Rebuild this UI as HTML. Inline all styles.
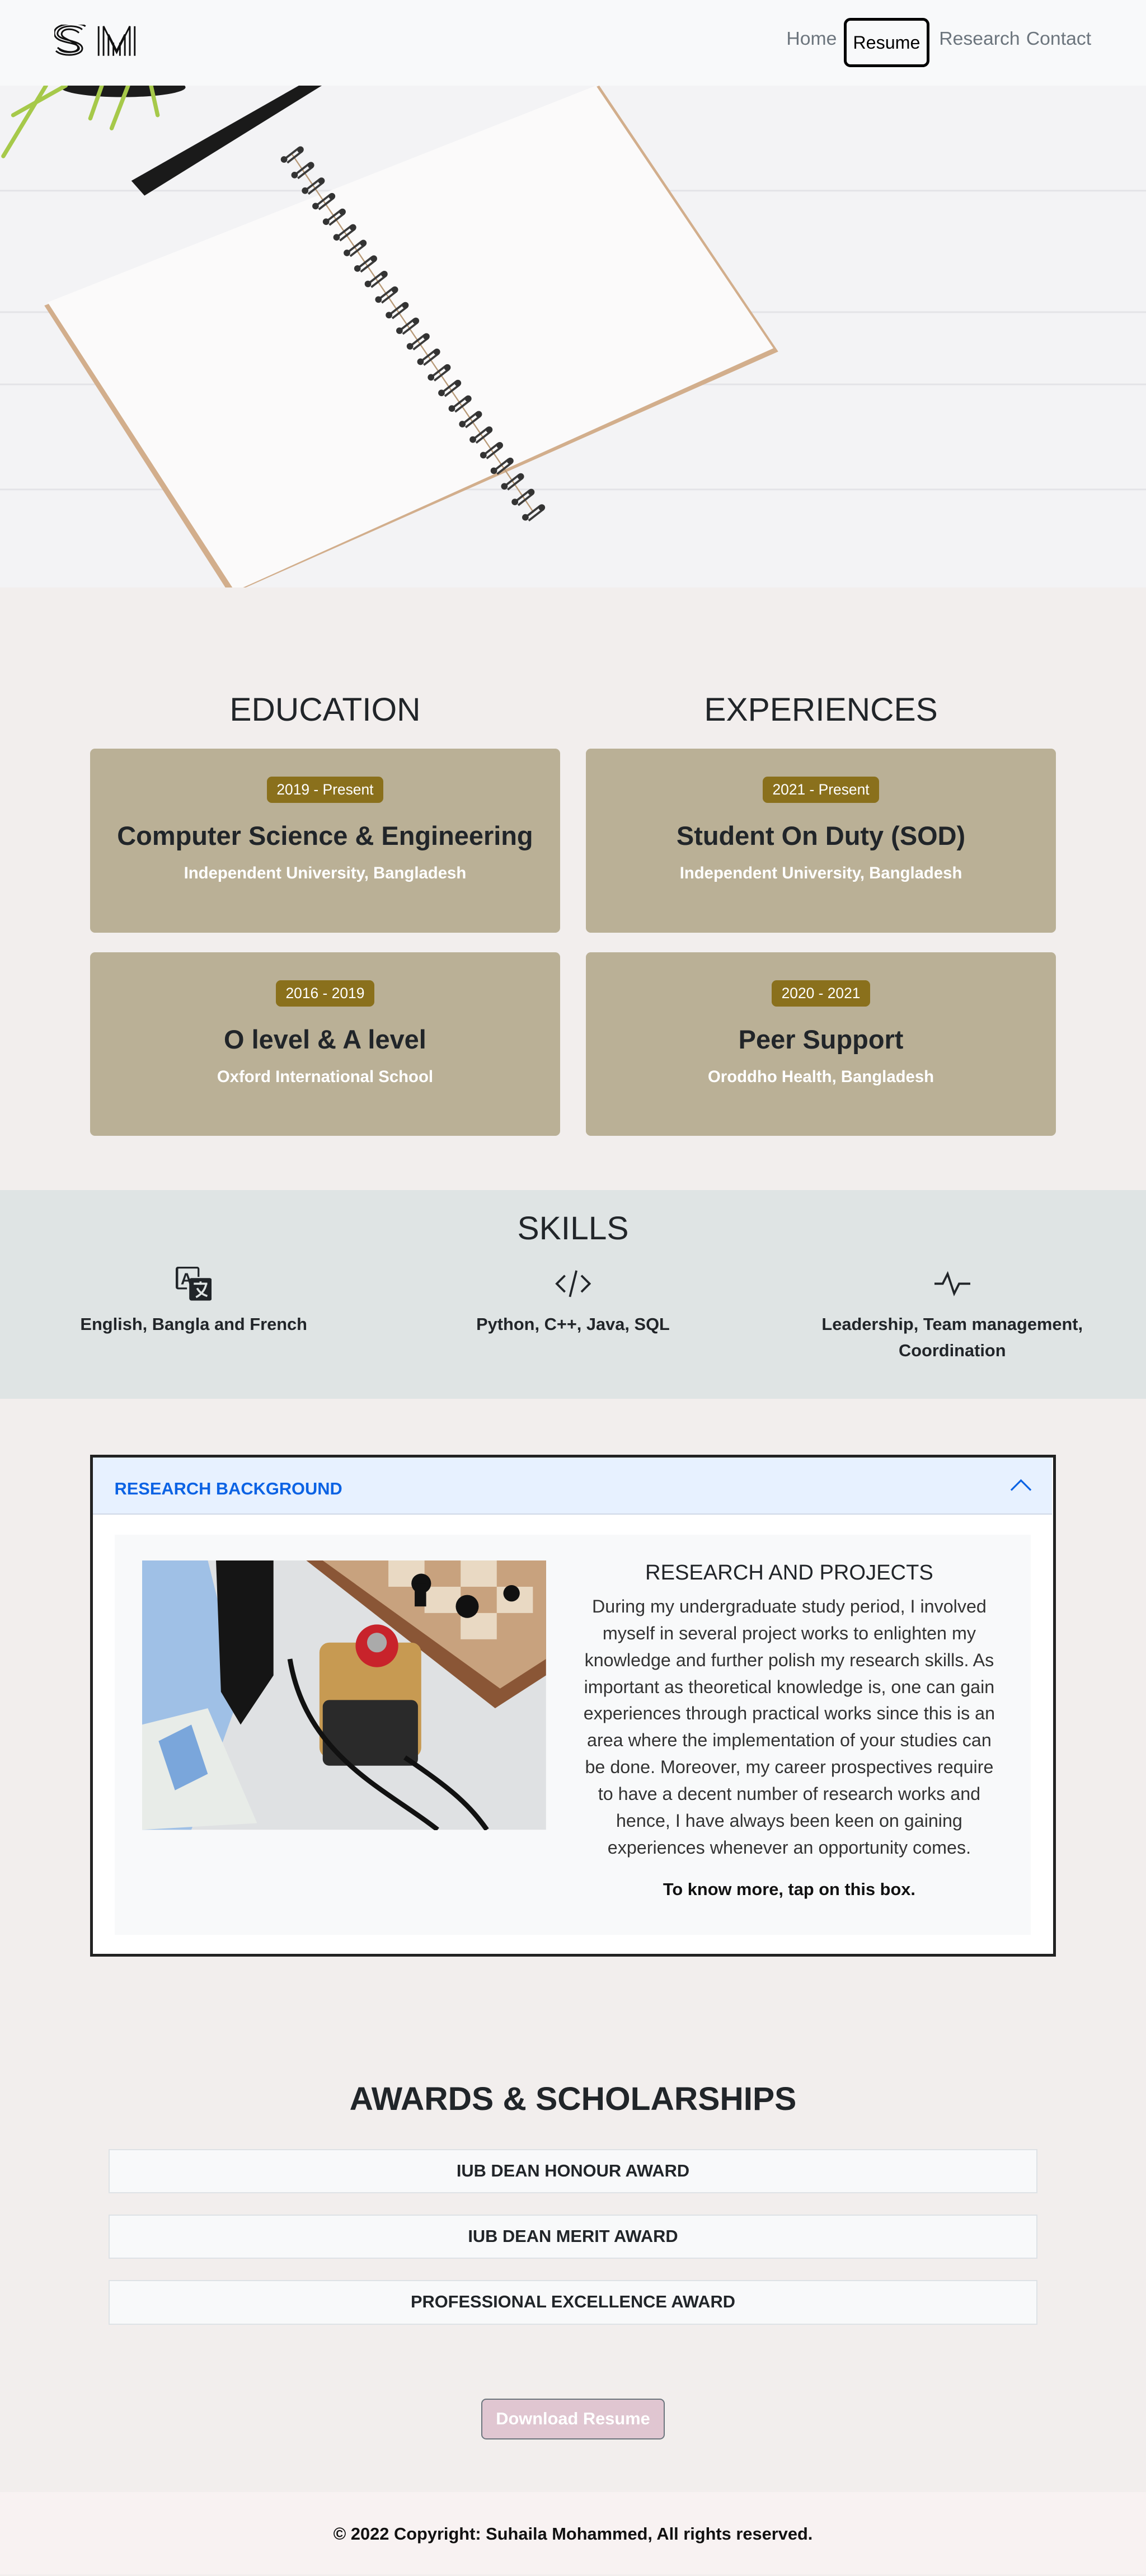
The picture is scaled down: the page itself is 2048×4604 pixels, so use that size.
<!DOCTYPE html>
<html><head><meta charset="utf-8">
<style>
html{zoom:2.9341}
*{box-sizing:border-box;margin:0;padding:0}
body{width:698px;height:1568px;overflow:hidden;background:#f2eeed;font-family:"Liberation Sans",sans-serif;color:#212529;position:relative}
.abs{position:absolute}
.nav{left:0;top:0;width:698px;height:52px;background:#f8f9fa}
.nav a{position:absolute;top:17px;font-size:11.5px;color:#6c757d;text-decoration:none}
.resume{left:514px;top:11px;width:52px;height:30px;border:2px solid #000;border-radius:4px;font-size:11px;color:#000;text-align:center;line-height:27px}
h2{position:absolute;font-weight:400;font-size:20px;text-align:center}
.card{position:absolute;width:286px;height:112px;background:#bab096;border-radius:3px;text-align:center}
.badge{display:inline-block;margin-top:17px;background:#8a701c;color:#fff;font-size:9px;padding:2px 6px;border-radius:3px;line-height:12px}
.card .t{font-size:16px;font-weight:bold;margin-top:11px}
.card .s{font-size:10px;font-weight:bold;color:#fff;margin-top:8px}
.skill{position:absolute;width:230px;text-align:center;font-size:10.5px;font-weight:bold;line-height:16px}
.award{position:absolute;left:66px;width:566px;height:27px;background:#f8f9fa;border:1px solid #dee2e6;text-align:center;font-size:10.5px;font-weight:bold;line-height:25px}
</style></head><body>
<div class="abs nav">
 <svg class="abs" style="left:33px;top:15px" width="62" height="20" viewBox="0 0 62 20">
  <g fill="none" stroke="#111" stroke-width="1">
   <path d="M17 3C14 0 3 0 2 5C1 10 16 9 17 14C18 19 5 20 1 16"/>
   <path d="M15 5C12 2 5 2 4.5 5.5C4 9 14 10 14.5 14C15 17 6 18 3 15"/>
   <path d="M19 1C15 -2 0 -1 0 5C0 12 14 10 15 14C16 17 7 18 2 14"/>
   <path d="M30 19V1L38 17L46 1V19M33 19V6L38 16L43 6V19M36 19V11M40 19V11M27 19V1M49 19V1"/>
  </g>
 </svg>
 <a style="left:479px">Home</a>
 <div class="abs resume">Resume</div>
 <a style="left:572px">Research</a>
 <a style="left:625px">Contact</a>
</div>
<svg class="abs" style="left:0;top:52px" width="698" height="306" viewBox="0 52 698 306">
 <defs>
  <g id="r"><path d="M-5 5L4 -2M-3 7L6 0" stroke="#3a3a3a" stroke-width="1.3" fill="none"/><circle cx="-5" cy="5" r="2" fill="#333"/><circle cx="5" cy="-1" r="2" fill="#333"/></g>
 </defs>
 <rect x="0" y="52" width="698" height="306" fill="#f3f3f5"/>
 <g stroke="#e3e3e7" stroke-width="1"><line x1="0" y1="116" x2="698" y2="116"/><line x1="0" y1="234" x2="698" y2="234"/><line x1="0" y1="298" x2="698" y2="298"/><line x1="0" y1="190" x2="698" y2="190"/></g>
 <path d="M27 186L365 52L474 214L140 362Z" fill="#d2ae8c"/>
 <path d="M29 184L363 52L471 212L143 360Z" fill="#fbfafa"/>
 <ellipse cx="75" cy="53" rx="38" ry="6" fill="#1c1c1c"/>
 <path d="M80 110L182 52L196 52L88 119Z" fill="#1a1a1a"/>
 <g stroke="#a6c94a" stroke-width="2.5" fill="none" stroke-linecap="round"><path d="M2 95L28 52"/><path d="M8 70L40 52"/><path d="M55 72L62 52"/><path d="M68 78L78 52"/><path d="M96 70L92 52"/></g>
 <line x1="178" y1="94" x2="325" y2="312" stroke="#b89a78" stroke-width="0.8"/>
 <use href="#r" x="178" y="92"/><use href="#r" x="184.4" y="101.5"/><use href="#r" x="190.8" y="111"/><use href="#r" x="197.2" y="120.4"/><use href="#r" x="203.6" y="129.9"/><use href="#r" x="210" y="139.4"/><use href="#r" x="216.3" y="148.9"/><use href="#r" x="222.7" y="158.4"/><use href="#r" x="229.1" y="167.8"/><use href="#r" x="235.5" y="177.3"/><use href="#r" x="241.9" y="186.8"/><use href="#r" x="248.3" y="196.3"/><use href="#r" x="254.7" y="205.8"/><use href="#r" x="261.1" y="215.2"/><use href="#r" x="267.5" y="224.7"/><use href="#r" x="273.9" y="234.2"/><use href="#r" x="280.2" y="243.7"/><use href="#r" x="286.6" y="253.2"/><use href="#r" x="293" y="262.6"/><use href="#r" x="299.4" y="272.1"/><use href="#r" x="305.8" y="281.6"/><use href="#r" x="312.2" y="291.1"/><use href="#r" x="318.6" y="300.6"/><use href="#r" x="325" y="310"/>
</svg>

<h2 style="left:55px;width:286px;top:421px">EDUCATION</h2>
<h2 style="left:357px;width:286px;top:421px">EXPERIENCES</h2>
<div class="card" style="left:55px;top:456px"><span class="badge">2019 - Present</span><div class="t">Computer Science &amp; Engineering</div><div class="s">Independent University, Bangladesh</div></div>
<div class="card" style="left:55px;top:580px"><span class="badge">2016 - 2019</span><div class="t">O level &amp; A level</div><div class="s">Oxford International School</div></div>
<div class="card" style="left:357px;top:456px"><span class="badge">2021 - Present</span><div class="t">Student On Duty (SOD)</div><div class="s">Independent University, Bangladesh</div></div>
<div class="card" style="left:357px;top:580px"><span class="badge">2020 - 2021</span><div class="t">Peer Support</div><div class="s">Oroddho Health, Bangladesh</div></div>

<div class="abs" style="left:0;top:725px;width:698px;height:127px;background:#dfe4e4"></div>
<h2 style="left:0;width:698px;top:737px">SKILLS</h2>
<svg class="abs" style="left:107px;top:771px" width="22" height="22" viewBox="0 0 16 16"><path d="M1 0.5h8.5a1 1 0 0 1 1 1V5h-0.8V1.5a.2.2 0 0 0-.2-.2H1.3a.2.2 0 0 0-.2.2v8a.2.2 0 0 0 .2.2H5v0.8H1a1 1 0 0 1-1-1v-8a1 1 0 0 1 1-1z" fill="#212529"/><text x="2.2" y="8.3" font-size="7" font-family="Liberation Sans" font-weight="bold" fill="#212529">A</text><rect x="6" y="5.5" width="10" height="10" rx="1" fill="#212529"/><path d="M8 8h6M11 7v1.5M9 14c2-1 4-3 4.5-6M9.5 10c1 2 3 3 4.5 3.5" stroke="#dfe4e4" stroke-width="0.9" fill="none"/></svg>
<svg class="abs" style="left:338px;top:772px" width="22" height="20" viewBox="0 0 22 20" fill="none" stroke="#212529" stroke-width="1.3"><path d="M6 5L1 10L6 15M16 5L21 10L16 15M13 2L9 18"/></svg>
<svg class="abs" style="left:569px;top:772px" width="22" height="20" viewBox="0 0 22 20" fill="none" stroke="#212529" stroke-width="1.3"><path d="M0 10H5L8 4L12 16L15 10H22"/></svg>
<div class="skill" style="left:3px;top:799px">English, Bangla and French</div>
<div class="skill" style="left:234px;top:799px">Python, C++, Java, SQL</div>
<div class="skill" style="left:465px;top:799px">Leadership, Team management,<br>Coordination</div>

<div class="abs" style="left:55px;top:886px;width:588px;height:306px;border:2px solid #222;background:#fff">
 <div class="abs" style="left:0;top:0;width:584px;height:35px;background:#e7f1ff;border-bottom:1px solid #cfd8e6"></div>
 <div class="abs" style="left:13px;top:13px;font-size:10.5px;font-weight:bold;color:#0c63e4">RESEARCH BACKGROUND</div>
 <svg class="abs" style="left:558px;top:12px" width="14" height="10" viewBox="0 0 14 10"><path d="M1 8L7 2L13 8" stroke="#0c63e4" stroke-width="1.1" fill="none"/></svg>
 <div class="abs" style="left:13px;top:47px;width:558px;height:244px;background:#f8f9fa"></div>
 <svg class="abs" style="left:30px;top:63px" width="246" height="164" viewBox="0 0 246 164">
  <rect width="246" height="164" fill="#dfe1e3"/>
  <path d="M100 0H246V70L215 90Z" fill="#8a5636"/>
  <path d="M110 0H246V60L218 78Z" fill="#c8a27e"/>
  <g fill="#e9d9c3"><rect x="150" y="0" width="22" height="16"/><rect x="194" y="0" width="22" height="16"/><rect x="172" y="16" width="22" height="16"/><rect x="216" y="16" width="22" height="16"/><rect x="194" y="32" width="22" height="16"/></g>
  <g fill="#111"><circle cx="170" cy="14" r="6"/><circle cx="198" cy="28" r="7"/><circle cx="225" cy="20" r="5"/><rect x="166" y="14" width="7" height="14"/></g>
  <path d="M0 0H40L60 80L30 164H0Z" fill="#9fc0e6"/>
  <path d="M0 100L40 90L70 160L0 164Z" fill="#e8ece8"/>
  <path d="M10 110L30 100L40 130L20 140Z" fill="#7aa6db"/>
  <path d="M45 0H80V70L60 100L48 80Z" fill="#151515"/>
  <rect x="108" y="50" width="62" height="70" rx="6" fill="#c79a52"/>
  <rect x="110" y="85" width="58" height="40" rx="4" fill="#2a2a2a"/>
  <circle cx="143" cy="52" r="13" fill="#c8232b"/>
  <circle cx="143" cy="50" r="6" fill="#aaa"/>
  <path d="M90 60C100 120 150 140 180 164M160 120C190 140 200 150 210 164" stroke="#111" stroke-width="3" fill="none"/>
 </svg>
 <div class="abs" style="left:294px;top:63px;width:260px;text-align:center">
  <div style="font-size:13px">RESEARCH AND PROJECTS</div>
  <div style="font-size:11px;line-height:16.3px;margin-top:5px;color:#333">During my undergraduate study period, I involved myself in several project works to enlighten my knowledge and further polish my research skills. As important as theoretical knowledge is, one can gain experiences through practical works since this is an area where the implementation of your studies can be done. Moreover, my career prospectives require to have a decent number of research works and hence, I have always been keen on gaining experiences whenever an opportunity comes.</div>
  <div style="font-size:10.5px;font-weight:bold;margin-top:11px;color:#111">To know more, tap on this box.</div>
 </div>
</div>

<h2 style="left:0;width:698px;top:1267px;font-weight:bold;font-size:20px">AWARDS &amp; SCHOLARSHIPS</h2>
<div class="award" style="top:1309px">IUB DEAN HONOUR AWARD</div>
<div class="award" style="top:1349px">IUB DEAN MERIT AWARD</div>
<div class="award" style="top:1389px">PROFESSIONAL EXCELLENCE AWARD</div>
<div class="abs" style="left:293px;top:1461px;width:112px;height:25px;background:#e0c6d1;border:1px solid #6c757d;border-radius:3px;color:#fff;font-size:10.5px;font-weight:bold;text-align:center;line-height:23px">Download Resume</div>
<div class="abs" style="left:0;top:1518px;width:698px;height:50px;background:#f8f2f2;text-align:center;font-size:10.5px;font-weight:bold;line-height:51px;color:#111">© 2022 Copyright: Suhaila Mohammed, All rights reserved.</div>
</body></html>
